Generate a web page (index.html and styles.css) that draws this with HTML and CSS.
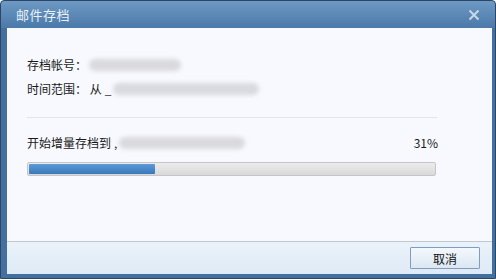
FILE: index.html
```html
<!DOCTYPE html>
<html>
<head>
<meta charset="utf-8">
<link rel="stylesheet" href="styles.css">
</head>
<body>
<div class="window">
  <div class="titlebar">
    <span class="title">邮件存档</span>
    <svg class="close" width="12" height="12" viewBox="0 0 12 12"><path d="M1.5 1.5 L10.5 10.5 M10.5 1.5 L1.5 10.5" stroke="#c9d7e6" stroke-width="2" fill="none"/></svg>
  </div>
  <div class="body">
    <div class="content">
      <div class="row"><span>存档帐号：</span><span class="blur b1"></span></div>
      <div class="row r2"><span>时间范围：&nbsp;从</span><span class="dash">_</span><span class="blur b2"></span></div>
      <div class="sep"></div>
      <div class="row r3"><span>开始增量存档到</span><span class="dash">,</span><span class="blur b3"></span><span class="pct">31%</span></div>
      <div class="progress"><div class="fill" style="width:31%"></div></div>
    </div>
    <div class="footer"><button class="btn">取消</button></div>
  </div>
</div>
</body>
</html>
```
FILE: styles.css
```css
html, body { margin: 0; padding: 0; background: #ffffff; }
body { width: 496px; height: 280px; overflow: hidden; font-family: "Noto Sans CJK SC", "Noto Sans", sans-serif; font-size: 12px; color: #1a1a1a; }
.window {
  box-sizing: border-box;
  width: 496px; height: 279px;
  border: 1px solid #2b4666;
  border-radius: 4px 4px 0 0;
  background: linear-gradient(#6d99c3 0, #4b79a9 27px, #44709f 27px);
  padding: 0 3px 4px 6px;
  display: flex; flex-direction: column;
}
.titlebar { height: 27px; flex: none; display: flex; align-items: center; justify-content: space-between; padding: 0 12px 0 9px; }
.title { color: #e8f0f8; font-size: 13px; letter-spacing: 0.5px; }
.close { margin-top: 1px; }
.body { flex: 1; display: flex; flex-direction: column; background: #f7f9fe; }
.content { flex: 1; padding: 29px 0 0 20px; width: 410px; }
.row { display: flex; align-items: center; height: 16px; line-height: 16px; }
.r2 { margin-top: 8px; }
.r3 { margin-top: 17px; }
.dash { color: #333; margin-left: 3px; }
.blur { display: inline-block; height: 12px; background: #d9d9de; filter: blur(2px); border-radius: 6px; }
.b1 { width: 92px; margin-left: 2px; }
.b2 { width: 146px; margin-left: 2px; }
.b3 { width: 126px; margin-left: 2px; }
.pct { margin-left: auto; margin-right: -1px; }
.sep { height: 1px; background: #e1e5eb; margin-top: 20px; }
.progress {
  margin-top: 11px; box-sizing: border-box; width: 409px; height: 14px;
  border: 1px solid #c6c6c6; border-radius: 2px;
  background: linear-gradient(#ececec, #d9d9d9);
  padding: 1px;
}
.fill { height: 10px; background: linear-gradient(#5b9ad6, #3a78bb); border-radius: 1px; }
.footer {
  flex: none; height: 27px; border-top: 1px solid #c3c7cd;
  background: linear-gradient(#eaf2fa, #dfeaf6);
  display: flex; justify-content: flex-end; align-items: flex-start;
  padding: 5px 12px 0 0;
}
.btn {
  width: 70px; height: 22px; border: 1px solid #7d9dc1; border-radius: 1px;
  background: linear-gradient(#f4f8fc, #dbe7f3);
  font-family: "Noto Sans CJK SC", sans-serif; font-size: 12px; color: #111; padding: 0;
}
```
